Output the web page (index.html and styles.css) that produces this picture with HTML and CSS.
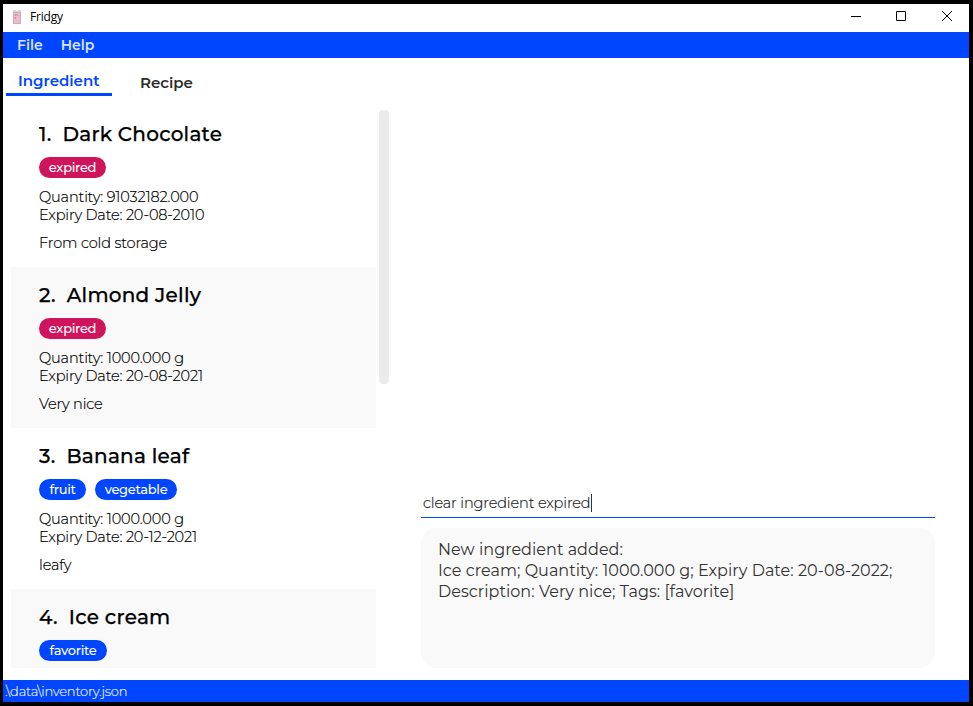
FILE: index.html
```html
<!DOCTYPE html>
<html lang="en">
<head>
<meta charset="utf-8">
<title>Fridgy</title>
<link rel="stylesheet" href="styles.css">
</head>
<body>
<div class="window">
  <header class="titlebar">
    <svg class="logo" width="10" height="16" viewBox="0 0 10 16"><path d="M1 1h3v1h2V1h3v2H1z" fill="#d9d3d6"/><path d="M1 3h8v11H1z" fill="#f4b9c8"/><path d="M1.500 3v11M8.500 3v11M1 6.500h8M1 3.500h8" stroke="#cfabba" fill="none"/><path d="M3.500 8v2M3 5.500h2" stroke="#dc8ba0" fill="none"/><path d="M1 14.500h8" stroke="#bbb3bd"/></svg>
    <span class="app-name">Fridgy</span>
    <svg class="controls" width="102" height="11" viewBox="0 0 102 11" fill="none" stroke="#000"><path d="M0 5.500h10M45.500 .5h9v9h-9zM91 0l10 10M101 0L91 10"/></svg>
  </header>
  <nav class="menu"><span class="file">File</span><span class="help">Help</span></nav>
  <div class="tabs"><div class="tab active"><span>Ingredient</span></div><div class="tab"><span>Recipe</span></div></div>
  <main class="content">
    <section class="list">
      <article class="card"><h2><span class="num">1.</span><span>Dark Chocolate</span></h2><div class="tags"><span class="tag expired">expired</span></div><p>Quantity: 91032182.000</p><p>Expiry Date: 20-08-2010</p><p class="desc">From cold storage</p></article>
      <article class="card"><h2><span class="num">2.</span><span>Almond Jelly</span></h2><div class="tags"><span class="tag expired">expired</span></div><p>Quantity: 1000.000 g</p><p>Expiry Date: 20-08-2021</p><p class="desc">Very nice</p></article>
      <article class="card"><h2><span class="num">3.</span><span>Banana leaf</span></h2><div class="tags"><span class="tag fruit">fruit</span><span class="tag vegetable">vegetable</span></div><p>Quantity: 1000.000 g</p><p>Expiry Date: 20-12-2021</p><p class="desc">leafy</p></article>
      <article class="card"><h2><span class="num">4.</span><span>Ice cream</span></h2><div class="tags"><span class="tag favorite">favorite</span></div></article>
    </section>
    <div class="scrollbar"></div>
    <section class="side">
      <div class="command"><span>clear ingredient expired</span><i class="caret"></i></div>
      <div class="result"><div>New ingredient added:</div><div>Ice cream; Quantity: 1000.000 g; Expiry Date: 20-08-2022;</div><div>Description: Very nice; Tags: [favorite]</div></div>
    </section>
  </main>
  <footer class="status">.\data\inventory.json</footer>
</div>
</body>
</html>
```
FILE: styles.css
```css
* { box-sizing: border-box; }
body { margin: 0; height: 706px; padding: 4px 4px 4px 3px; background: #000; font-family: Montserrat, Inter, sans-serif; color: #000; overflow: hidden; white-space: nowrap; }
.window { height: 698px; display: flex; flex-direction: column; background: #fff; }
.titlebar { height: 28px; display: flex; align-items: center; padding: 0 16px 3px 9px; }
.app-name { margin-left: 8px; font: 12px/16px "Open Sans", sans-serif; letter-spacing: -.2px; }
.controls { margin-left: auto; }
.menu { height: 26px; display: flex; gap: 18px; padding-left: 14px; background: #0045ff; color: #d9e3ff; font-size: 14px; font-weight: 600; line-height: 26px; }
.tabs { height: 48px; display: flex; padding: 8px 3px 0; font-size: 15px; font-weight: 600; color: #2b2b2b; }
.tab { height: 30px; padding: 7px 0 0 28px; line-height: 20px; }
.tab.active { width: 106px; padding: 5px 0 0 12px; color: #0045ff; border-bottom: 3px solid #0045ff; }
.content { height: 574px; display: flex; padding-left: 8px; }
.list { width: 365px; height: 562px; overflow: hidden; }
.card { height: 161px; padding: 16px 28px 0; }
.card:nth-child(even) { background: #f9f9f9; }
h2 { display: flex; gap: 11px; margin: 0 0 10px; font-size: 20px; line-height: 25px; font-weight: 500; letter-spacing: .24px; -webkit-text-stroke: .25px; }
.tags { display: flex; gap: 9px; height: 21px; margin-bottom: 10px; }
.tag { height: 21px; border-radius: 11px; background: #0045ff; color: #fff; font-size: 13px; line-height: 21px; font-weight: 500; text-align: center; letter-spacing: -.3px; }
.expired { width: 67px; background: #d0145b; }
.fruit { width: 47px; }
.vegetable { width: 82px; }
.favorite { width: 68px; }
p { margin: 0; font-size: 14.5px; line-height: 18px; font-weight: 300; letter-spacing: -.14px; -webkit-text-stroke: .2px; }
.desc { margin-top: 10px; }
.scrollbar { width: 10px; height: 274px; margin: 4px 0 0 3px; border-radius: 4px; background: #ebebeb; }
.side { width: 514px; margin: 382px 0 0 32px; }
.command { display: flex; align-items: center; height: 30px; padding-left: 2px; border-bottom: 1px solid #0045ff; font-size: 14.5px; font-weight: 300; letter-spacing: -.13px; -webkit-text-stroke: .2px; color: #222; }
.caret { width: 1px; height: 18px; background: #333; }
.result { height: 140px; margin-top: 10px; padding: 11px 17px; border-radius: 16px; background: #f9f9f9; color: #333; font-size: 16px; line-height: 21px; letter-spacing: .04px; }
.status { height: 22px; padding-left: 2px; background: #0045ff; color: #e6ecff; font-size: 13px; line-height: 22px; font-weight: 300; letter-spacing: -.2px; -webkit-text-stroke: .2px; }
```
